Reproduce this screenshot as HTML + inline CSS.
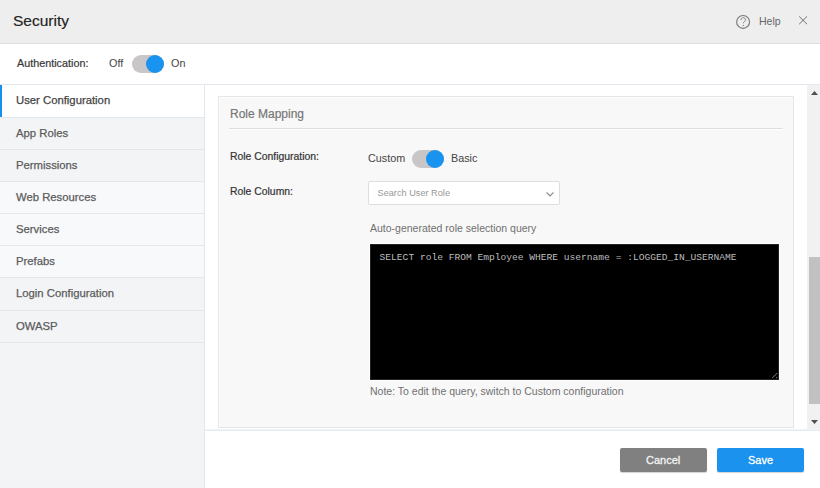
<!DOCTYPE html>
<html><head><meta charset="utf-8">
<style>
*{margin:0;padding:0;box-sizing:border-box}
html,body{width:820px;height:488px;overflow:hidden;background:#fff;font-family:"Liberation Sans",sans-serif}
.a{position:absolute;white-space:nowrap}
#hdr{left:0;top:0;width:820px;height:44px;background:#eeeeee;border-bottom:1px solid #dedede;box-shadow:0 1px 1px rgba(0,0,0,.03)}
#title{left:13px;top:10.6px;font-size:15.5px;color:#222;line-height:20px;-webkit-text-stroke:0.15px currentColor}
#help{left:759px;top:14.5px;font-size:10.5px;color:#666;line-height:12px}
#auth{left:0;top:44px;width:820px;height:41px;background:#fff;border-bottom:1px solid #e3e8ee}
.lbl{font-size:10.8px;color:#333;line-height:12px}
.m{-webkit-text-stroke:0.2px currentColor}
.tog{width:32px;height:18px;border-radius:9px;background:#c8c6c6}
.knob{width:18.5px;height:18.5px;border-radius:50%;background:#1893f0}
#side{left:0;top:85px;width:205px;height:403px;background:#f3f4f6;border-right:1px solid #e3e7ec}
.it{-webkit-text-stroke:0.25px currentColor;left:0;width:204px;height:32px;border-bottom:1px solid #e3e7ec;font-size:11.3px;color:#5c5c5c;line-height:14px;padding-left:16px;padding-top:8px}
.g{background:#f3f4f6}.l{background:#f8f9fb}
#panel{left:218px;top:96px;width:576px;height:332px;background:#f8f8f8;border:1px solid #e6e6e6;box-shadow:inset 1px 1px 0 #fcfcfc}
#foot{left:205px;top:430px;width:615px;height:58px;background:#fff;border-top:1px solid #e6ebef;box-shadow:0 -1px 0 #f1f4f6}
.btn{-webkit-text-stroke:0.3px currentColor;height:24px;width:87px;border-radius:2px;color:#f4f4f4;font-size:11px;text-align:center;line-height:24px;box-shadow:0 1px 1px rgba(0,0,0,.18)}
</style></head><body>
<div id="hdr" class="a"></div>
<div id="title" class="a">Security</div>
<svg class="a" style="left:735px;top:14px" width="16" height="16" viewBox="0 0 16 16">
  <circle cx="8.1" cy="7.9" r="6.45" fill="none" stroke="#7a7a7a" stroke-width="1.15"/>
  <path d="M5.9 6.1c0-1.4 1-2.4 2.3-2.4s2.3.9 2.3 2.2c0 1.5-2.1 1.7-2.1 3.2v.2" fill="none" stroke="#808080" stroke-width="0.95"/>
  <circle cx="8.35" cy="11.4" r=".65" fill="#808080"/>
</svg>
<div id="help" class="a">Help</div>
<svg class="a" style="left:798px;top:15px" width="10" height="10" viewBox="0 0 10 10">
  <path d="M1.2 1.4L9 9.2M9 1.4L1.2 9.2" stroke="#707070" stroke-width="1"/>
</svg>

<div id="auth" class="a"></div>
<div class="a lbl m" style="left:17px;top:57px;color:#383838">Authentication:</div>
<div class="a lbl" style="left:109px;top:57px;color:#444">Off</div>
<div class="a tog" style="left:132px;top:55px"></div>
<div class="a knob" style="left:145.5px;top:54.8px"></div>
<div class="a lbl" style="left:171px;top:57px;color:#444">On</div>

<div id="side" class="a"></div>
<div class="a it" style="top:85px;height:33px;padding-top:8px;background:#fff;color:#444">User Configuration</div>
<div class="a" style="left:0;top:85px;width:2px;height:32px;background:#1791ee"></div>
<div class="a it g" style="top:118px;height:32px;padding-top:8px">App Roles</div>
<div class="a it g" style="top:150px;height:32px;padding-top:8px">Permissions</div>
<div class="a it l" style="top:182px;height:32px;padding-top:8px">Web Resources</div>
<div class="a it l" style="top:214px;height:32px;padding-top:8px">Services</div>
<div class="a it l" style="top:246px;height:32px;padding-top:8px">Prefabs</div>
<div class="a it g" style="top:278px;height:33px;padding-top:8px">Login Configuration</div>
<div class="a it g" style="top:311px;height:32px;padding-top:8px">OWASP</div>

<div id="panel" class="a"></div>
<div class="a m" style="left:230px;top:106.5px;font-size:12px;color:#777;line-height:14px">Role Mapping</div>
<div class="a" style="left:229px;top:128px;width:554px;height:1px;background:#dedede;box-shadow:0 1px 0 #fff"></div>
<div class="a lbl m" style="left:230px;top:151px;color:#333;font-size:10.4px">Role Configuration:</div>
<div class="a lbl" style="left:368px;top:152px;color:#444">Custom</div>
<div class="a tog" style="left:412px;top:150px"></div>
<div class="a knob" style="left:425.8px;top:149.7px"></div>
<div class="a lbl" style="left:451px;top:152px;color:#444">Basic</div>
<div class="a lbl m" style="left:230px;top:186px;color:#333;font-size:10.4px">Role Column:</div>
<div class="a" style="left:368px;top:181px;width:191.5px;height:24px;background:#fff;border:1px solid #dedede;border-radius:2px"></div>
<div class="a" style="left:377.5px;top:187px;font-size:9.2px;color:#999;line-height:12px">Search User Role</div>
<svg class="a" style="left:545px;top:189.5px" width="10" height="8" viewBox="0 0 10 8">
  <path d="M1.6 2.5L5 5.9 8.4 2.5" fill="none" stroke="#888" stroke-width="1.1"/>
</svg>
<div class="a lbl" style="left:370px;top:222px;color:#707070;font-size:10.5px">Auto-generated role selection query</div>
<div class="a" style="left:370px;top:244px;width:409px;height:136px;background:#000;border:1px solid #222;box-shadow:0 0 0 1px #fff"></div>
<div class="a" style="left:379.6px;top:251.6px;font-family:'Liberation Mono',monospace;font-size:9.6px;color:#bdbdbd;line-height:12px">SELECT role FROM Employee WHERE username = :LOGGED_IN_USERNAME</div>
<svg class="a" style="left:770px;top:371px" width="10" height="10" viewBox="0 0 10 10">
  <path d="M7.3 2L2.3 7" stroke="#9a9a9a" stroke-width="0.9"/><path d="M7.2 5.6L5.6 7.2H7.2z" fill="#888"/>
</svg>
<div class="a lbl" style="left:370px;top:385px;color:#707070;font-size:10.5px">Note: To edit the query, switch to Custom configuration</div>

<!-- scrollbar -->
<div class="a" style="left:807px;top:85px;width:13px;height:345px;background:#f1f1f1"></div>
<div class="a" style="left:809px;top:257px;width:11px;height:147px;background:#c1c1c1"></div>
<svg class="a" style="left:810px;top:90px" width="9" height="6" viewBox="0 0 9 6"><path d="M4.5 1L8 5H1z" fill="#505050"/></svg>
<svg class="a" style="left:810px;top:419px" width="9" height="6" viewBox="0 0 9 6"><path d="M1 1H8L4.5 5z" fill="#505050"/></svg>

<div id="foot" class="a"></div>
<div class="a btn" style="left:619.6px;top:448px;background:#808080">Cancel</div>
<div class="a btn" style="left:717px;top:448px;background:#1a92ee;color:#fff">Save</div>
</body></html>
